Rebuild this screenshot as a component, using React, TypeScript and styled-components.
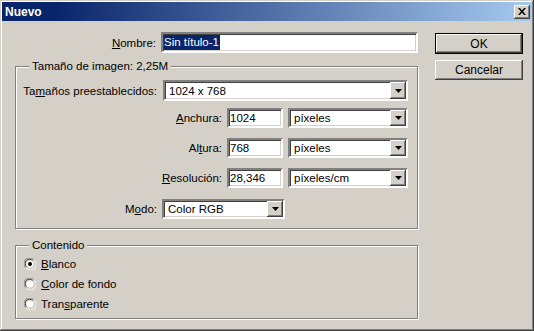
import React, { useState } from 'react';
import styled, { createGlobalStyle } from 'styled-components';

const GlobalStyle = createGlobalStyle`
  html, body {
    margin: 0;
    padding: 0;
    background: #d4d0c8;
  }
  * {
    box-sizing: border-box;
  }
`;

const raised = `
  background: #d4d0c8;
  box-shadow:
    inset -1px -1px #404040,
    inset 1px 1px #ffffff,
    inset -2px -2px #808080,
    inset 2px 2px #d4d0c8;
`;

const sunken = `
  background: #ffffff;
  border: 2px solid;
  border-color: #808080 #ffffff #ffffff #808080;
  box-shadow: inset 1px 1px #404040, inset -1px -1px #d4d0c8;
`;

const Window = styled.div`
  width: 534px;
  height: 331px;
  display: flex;
  flex-direction: column;
  padding: 2px;
  background: #d4d0c8;
  font-family: 'Liberation Sans', Arial, sans-serif;
  font-size: 11.5px;
  color: #000;
  box-shadow:
    inset -1px -1px #404040,
    inset 1px 1px #d4d0c8,
    inset -2px -2px #808080,
    inset 2px 2px #ffffff;
`;

const TitleBar = styled.div`
  height: 19px;
  display: flex;
  align-items: center;
  justify-content: space-between;
  padding: 0 2px 0 3px;
  background: linear-gradient(to right, #0a246a 0%, #0a246a 10%, #a6caf0 100%);
`;

const Title = styled.span`
  color: #fff;
  font-weight: bold;
  font-size: 12px;
`;

const CloseButton = styled.div`
  width: 16px;
  height: 14px;
  display: flex;
  align-items: center;
  justify-content: center;
  ${raised}
`;

const Body = styled.div`
  flex: 1;
  display: flex;
  padding: 11px 0 0 13px;
`;

const MainColumn = styled.div`
  width: 403px;
  display: flex;
  flex-direction: column;
`;

const SideColumn = styled.div`
  display: flex;
  flex-direction: column;
  gap: 6px;
  margin-left: 17px;
  padding-top: 1px;
`;

const Button = styled.div<{ $default?: boolean }>`
  width: 88px;
  height: ${p => (p.$default ? 21 : 20)}px;
  display: flex;
  align-items: center;
  justify-content: center;
  font-size: 12px;
  ${raised}
  border: ${p => (p.$default ? '1px solid #000' : 'none')};
`;

const Row = styled.div<{ $mt?: number }>`
  display: flex;
  align-items: center;
  gap: 5px;
  margin-top: ${p => p.$mt ?? 0}px;
`;

const Label = styled.span<{ $w: number }>`
  width: ${p => p.$w}px;
  text-align: right;
  white-space: nowrap;
`;

const Acc = styled.span`
  text-decoration: underline;
`;

const TextField = styled.div<{ $w?: number; $h: number }>`
  ${sunken}
  width: ${p => (p.$w ? `${p.$w}px` : 'auto')};
  flex: ${p => (p.$w ? 'none' : 1)};
  height: ${p => p.$h}px;
  display: flex;
  align-items: center;
  padding-left: 1px;
  white-space: nowrap;
  overflow: hidden;
`;

const Selected = styled.span`
  background: #0a246a;
  color: #fff;
  padding: 1px 1px 2px 0;
`;

const SelectBox = styled.div<{ $w: number; $h: number }>`
  ${sunken}
  width: ${p => p.$w}px;
  height: ${p => p.$h}px;
  display: flex;
  align-items: stretch;
`;

const SelectValue = styled.span`
  flex: 1;
  display: flex;
  align-items: center;
  padding-left: 4px;
  white-space: nowrap;
`;

const ArrowButton = styled.div`
  width: 16px;
  display: flex;
  align-items: center;
  justify-content: center;
  ${raised}
`;

const Group = styled.fieldset<{ $mt: number }>`
  margin: ${p => p.$mt}px 0 0 0;
  padding: 0;
  min-width: 0;
  border: 1px solid #808080;
  box-shadow: inset 1px 1px #ffffff, 1px 1px #ffffff;
`;

const Legend = styled.legend`
  margin-left: 13px;
  padding: 0 3px;
  line-height: 14px;
  background: #d4d0c8;
`;

const GroupContent = styled.div<{ $pad: string }>`
  display: flex;
  flex-direction: column;
  padding: ${p => p.$pad};
`;

const RadioRow = styled.label`
  height: 20px;
  display: flex;
  align-items: center;
  gap: 5px;
`;

const RadioCircle = styled.span`
  width: 12px;
  height: 12px;
  display: block;
`;

const Arrow = () => (
  <svg width="7" height="4" viewBox="0 0 7 4">
    <path d="M0 0h7L3.5 4z" fill="#000" />
  </svg>
);

const Select = ({ w, h, value }: { w: number; h: number; value: string }) => (
  <SelectBox $w={w} $h={h}>
    <SelectValue>{value}</SelectValue>
    <ArrowButton>
      <Arrow />
    </ArrowButton>
  </SelectBox>
);

const Radio = ({ checked }: { checked: boolean }) => (
  <RadioCircle>
    <svg width="12" height="12" viewBox="0 0 12 12">
      <path d="M1.5 9.5A5 5 0 0 1 9.5 1.5" stroke="#808080" strokeWidth="1" fill="none" />
      <path d="M2.5 8.5A4 4 0 0 1 8.5 2.5" stroke="#404040" strokeWidth="1" fill="none" />
      <circle cx="6" cy="6" r="3.6" fill="#fff" />
      <path d="M10.5 2.5A5 5 0 0 1 2.5 10.5" stroke="#ffffff" strokeWidth="1" fill="none" />
      <path d="M9.5 3.5A4 4 0 0 1 3.5 9.5" stroke="#d4d0c8" strokeWidth="1" fill="none" />
      {checked && <circle cx="6" cy="6" r="2" fill="#000" />}
    </svg>
  </RadioCircle>
);

const contents = [
  { key: 'blanco', pre: '', acc: 'B', post: 'lanco' },
  { key: 'fondo', pre: '', acc: 'C', post: 'olor de fondo' },
  { key: 'transp', pre: 'Tran', acc: 's', post: 'parente' },
];

const App = () => {
  const [content, setContent] = useState('blanco');

  return (
    <>
      <GlobalStyle />
      <Window>
        <TitleBar>
          <Title>Nuevo</Title>
          <CloseButton>
            <svg width="8" height="7" viewBox="0 0 8 7">
              <path d="M0 0h2l2 2.5L6 0h2L5 3.5 8 7H6L4 4.5 2 7H0l3-3.5z" fill="#000" />
            </svg>
          </CloseButton>
        </TitleBar>
        <Body>
          <MainColumn>
            <Row>
              <Label $w={141}>
                <Acc>N</Acc>ombre:
              </Label>
              <TextField $h={21}>
                <Selected>Sin título-1</Selected>
              </TextField>
            </Row>

            <Group $mt={6}>
              <Legend>Tamaño de imagen: 2,25M</Legend>
              <GroupContent $pad="7px 9px 9px 6px">
                <Row $mt={0} style={{ gap: 6 }}>
                  <Label $w={135}>
                    Ta<Acc>m</Acc>años preestablecidos:
                  </Label>
                  <Select w={245} h={21} value="1024 x 768" />
                </Row>
                <Row $mt={7}>
                  <Label $w={200}>
                    <Acc>A</Acc>nchura:
                  </Label>
                  <TextField $w={56} $h={20}>1024</TextField>
                  <Select w={120} h={20} value="píxeles" />
                </Row>
                <Row $mt={10}>
                  <Label $w={200}>
                    Al<Acc>t</Acc>ura:
                  </Label>
                  <TextField $w={56} $h={20}>768</TextField>
                  <Select w={120} h={20} value="píxeles" />
                </Row>
                <Row $mt={10}>
                  <Label $w={200}>
                    <Acc>R</Acc>esolución:
                  </Label>
                  <TextField $w={56} $h={20}>28,346</TextField>
                  <Select w={120} h={20} value="píxeles/cm" />
                </Row>
                <Row $mt={11}>
                  <Label $w={135}>
                    M<Acc>o</Acc>do:
                  </Label>
                  <Select w={123} h={20} value="Color RGB" />
                </Row>
              </GroupContent>
            </Group>

            <Group $mt={9}>
              <Legend>Contenido</Legend>
              <GroupContent $pad="2px 9px 4px 8px">
                {contents.map(c => (
                  <RadioRow key={c.key} onClick={() => setContent(c.key)}>
                    <Radio checked={content === c.key} />
                    <span>
                      {c.pre}
                      <Acc>{c.acc}</Acc>
                      {c.post}
                    </span>
                  </RadioRow>
                ))}
              </GroupContent>
            </Group>
          </MainColumn>

          <SideColumn>
            <Button $default>OK</Button>
            <Button>Cancelar</Button>
          </SideColumn>
        </Body>
      </Window>
    </>
  );
};

export default App;
